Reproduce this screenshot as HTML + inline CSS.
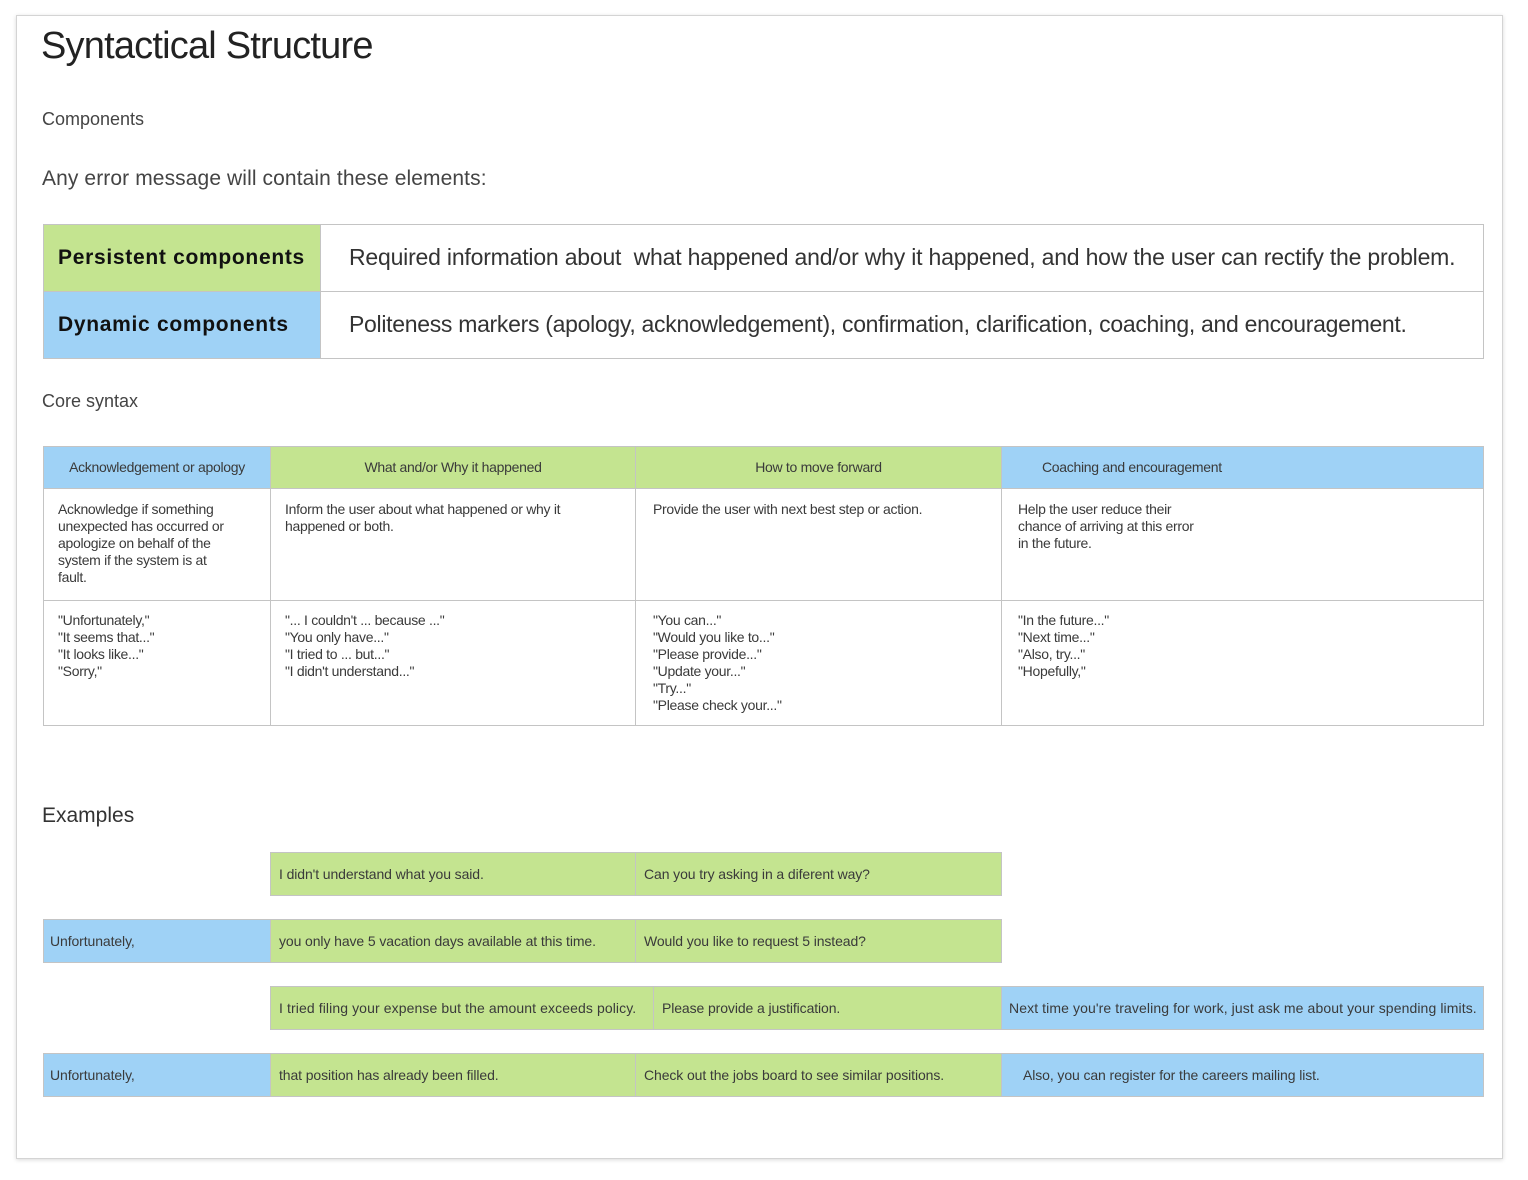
<!DOCTYPE html>
<html><head><meta charset="utf-8"><style>
*{margin:0;padding:0;box-sizing:border-box}
body{width:1528px;height:1180px;background:#fff;position:relative;font-family:"Liberation Sans",sans-serif;color:#333;overflow:hidden}
.frame{position:absolute;left:16px;top:15px;width:1487px;height:1144px;border:1px solid #d4d4d4;box-shadow:0 1px 4px rgba(0,0,0,.15);background:#fff}
.a{position:absolute;white-space:nowrap}
.c{position:absolute;border:1px solid #c4c4c4;font-size:14px;letter-spacing:-0.3px;color:#3a3a3a;line-height:17px;white-space:nowrap}
.g{background:#c4e490}
.b{background:#9fd2f6}
.ex{height:44px;line-height:42px;padding-left:8px;letter-spacing:-0.1px}
</style></head><body>
<div class="frame"></div>
<div class="a" style="left:41px;top:25px;font-size:38px;font-weight:300;color:#222;letter-spacing:-0.8px">Syntactical Structure</div>
<div class="a" style="left:42px;top:109px;font-size:18px;color:#444">Components</div>
<div class="a" style="left:42px;top:167px;font-size:21px;color:#444;letter-spacing:0.1px">Any error message will contain these elements:</div>

<div class="c g" style="left:43px;top:224px;width:278px;height:68px;line-height:66px;padding-left:14px;font-size:21px;font-weight:bold;color:#111;letter-spacing:0.7px">Persistent components</div>
<div class="c" style="left:320px;top:224px;width:1164px;height:68px;line-height:64px;padding-left:28px;font-size:23px;letter-spacing:-0.2px;color:#333">Required information about&nbsp; what happened and/or why it happened, and how the user can rectify the problem.</div>
<div class="c b" style="left:43px;top:291px;width:278px;height:68px;line-height:66px;padding-left:14px;font-size:21px;font-weight:bold;color:#111;letter-spacing:0.7px">Dynamic components</div>
<div class="c" style="left:320px;top:291px;width:1164px;height:68px;line-height:64px;padding-left:28px;font-size:23px;letter-spacing:-0.3px;color:#333">Politeness markers (apology, acknowledgement), confirmation, clarification, coaching, and encouragement.</div>

<div class="a" style="left:42px;top:391px;font-size:18px;color:#444">Core syntax</div>

<div class="c b" style="left:43px;top:446px;width:228px;height:43px;line-height:41px;text-align:center">Acknowledgement or apology</div>
<div class="c g" style="left:270px;top:446px;width:366px;height:43px;line-height:41px;text-align:center">What and/or Why it happened</div>
<div class="c g" style="left:635px;top:446px;width:367px;height:43px;line-height:41px;text-align:center">How to move forward</div>
<div class="c b" style="left:1001px;top:446px;width:483px;height:43px;line-height:41px;padding-left:40px">Coaching and encouragement</div>

<div class="c" style="left:43px;top:488px;width:228px;height:113px;padding:12px 14px">Acknowledge if something<br>unexpected has occurred or<br>apologize on behalf of the<br>system if the system is at<br>fault.</div>
<div class="c" style="left:270px;top:488px;width:366px;height:113px;padding:12px 14px">Inform the user about what happened or why it<br>happened or both.</div>
<div class="c" style="left:635px;top:488px;width:367px;height:113px;padding:12px 17px">Provide the user with next best step or action.</div>
<div class="c" style="left:1001px;top:488px;width:483px;height:113px;padding:12px 16px">Help the user reduce their<br>chance of arriving at this error<br>in the future.</div>

<div class="c" style="left:43px;top:600px;width:228px;height:126px;padding:11px 14px">"Unfortunately,"<br>"It seems that..."<br>"It looks like..."<br>"Sorry,"</div>
<div class="c" style="left:270px;top:600px;width:366px;height:126px;padding:11px 14px">"... I couldn't ... because ..."<br>"You only have..."<br>"I tried to ... but..."<br>"I didn't understand..."</div>
<div class="c" style="left:635px;top:600px;width:367px;height:126px;padding:11px 17px">"You can..."<br>"Would you like to..."<br>"Please provide..."<br>"Update your..."<br>"Try..."<br>"Please check your..."</div>
<div class="c" style="left:1001px;top:600px;width:483px;height:126px;padding:11px 16px">"In the future..."<br>"Next time..."<br>"Also, try..."<br>"Hopefully,"</div>

<div class="a" style="left:42px;top:804px;font-size:21px;color:#333">Examples</div>

<div class="c g ex" style="left:270px;top:852px;width:366px">I didn't understand what you said.</div>
<div class="c g ex" style="left:635px;top:852px;width:367px">Can you try asking in a diferent way?</div>

<div class="c b ex" style="left:43px;top:919px;width:228px;padding-left:6px">Unfortunately,</div>
<div class="c g ex" style="left:270px;top:919px;width:366px">you only have 5 vacation days available at this time.</div>
<div class="c g ex" style="left:635px;top:919px;width:367px">Would you like to request 5 instead?</div>

<div class="c g ex" style="left:270px;top:986px;width:384px;letter-spacing:0.1px">I tried filing your expense but the amount exceeds policy.</div>
<div class="c g ex" style="left:653px;top:986px;width:349px">Please provide a justification.</div>
<div class="c b ex" style="left:1001px;top:986px;width:483px;padding-left:7px;letter-spacing:0.1px">Next time you're traveling for work, just ask me about your spending limits.</div>

<div class="c b ex" style="left:43px;top:1053px;width:228px;padding-left:6px">Unfortunately,</div>
<div class="c g ex" style="left:270px;top:1053px;width:366px">that position has already been filled.</div>
<div class="c g ex" style="left:635px;top:1053px;width:367px">Check out the jobs board to see similar positions.</div>
<div class="c b ex" style="left:1001px;top:1053px;width:483px;padding-left:21px">Also, you can register for the careers mailing list.</div>
</body></html>
